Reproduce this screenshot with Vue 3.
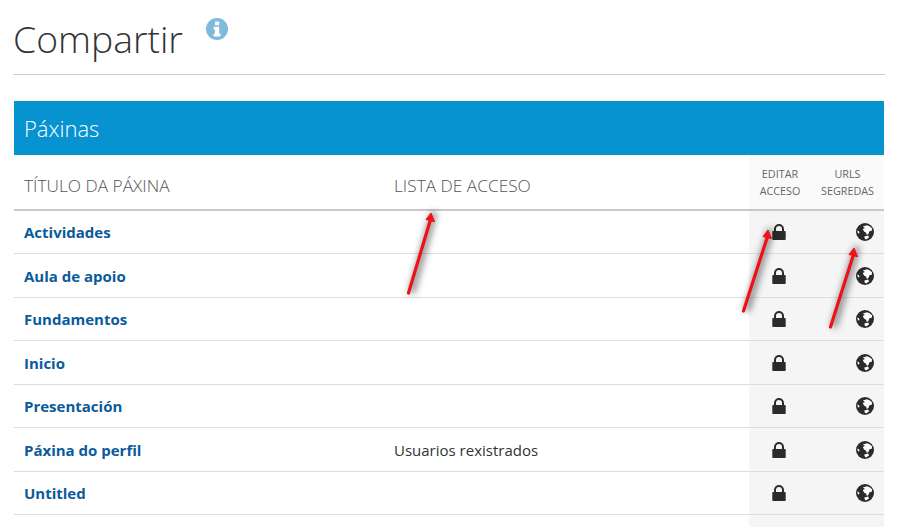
<script setup>
const pages = [
  { name: 'Actividades', access: '' },
  { name: 'Aula de apoio', access: '' },
  { name: 'Fundamentos', access: '' },
  { name: 'Inicio', access: '' },
  { name: 'Presentación', access: '' },
  { name: 'Páxina do perfil', access: 'Usuarios rexistrados' },
  { name: 'Untitled', access: '' },
  { name: '', access: '' }
]

// start and end of each red annotation arrow, in page coordinates
const arrows = [
  { x1: 408.5, y1: 293, x2: 431, y2: 214 },
  { x1: 743.5, y1: 311, x2: 768, y2: 231 },
  { x1: 830.5, y1: 327, x2: 854, y2: 249 }
]
</script>

<template>
  <div class="page">
    <header class="head">
      <h1>Compartir</h1>
      <svg class="info" viewBox="0 0 22 22" aria-hidden="true">
        <circle cx="11" cy="11" r="11" fill="#7fbadc" />
        <rect x="9" y="3.6" width="4.2" height="3.6" rx="0.6" fill="#fff" />
        <path d="M7.6 8.8h5.6v7h1.3v2.6H7.6v-2.6h1.3v-4.4H7.6z" fill="#fff" />
      </svg>
    </header>

    <section class="panel">
      <h2>Páxinas</h2>
      <table>
        <thead>
          <tr>
            <th class="title">TÍTULO DA PÁXINA</th>
            <th class="list">LISTA DE ACCESO</th>
            <th class="small edit">EDITAR<br>ACCESO</th>
            <th class="small urls">URLS<br>SEGREDAS</th>
          </tr>
        </thead>
        <tbody>
          <tr v-for="p in pages" :key="p.name" :class="{ last: !p.name }">
            <td class="title"><a href="#">{{ p.name }}</a></td>
            <td class="list">{{ p.access }}</td>
            <td class="edit">
              <svg v-if="p.name" class="lock" viewBox="0 0 14 16" aria-hidden="true">
                <path d="M3 7.5V5a4 4 0 0 1 8 0v2.5" fill="none" stroke="#2b2b2b" stroke-width="2" />
                <rect x="0.3" y="7" width="13.4" height="9" rx="0.8" fill="#2b2b2b" />
              </svg>
            </td>
            <td class="urls">
              <svg v-if="p.name" class="globe" viewBox="0 0 18 18" aria-hidden="true">
                <circle cx="9" cy="9" r="9" fill="#2b2b2b" />
                <path d="M6.8 3.6L11 2.2l2.6 1 2.4 2-.2 2.6-2.4.5-1 2.6-1.6 1.2-.6-2.4-2.2-1.2-1.2-2.4 2.2-1z" fill="#fff" />
                <path d="M8.4 13.4l3.8-.8.8 2-3 2-1.4-1.4z" fill="#fff" />
                <path d="M1.2 7.4l1.8.8.5 1.7-1.5.5z" fill="#fff" />
              </svg>
            </td>
          </tr>
        </tbody>
      </table>
    </section>

    <svg class="arrows" width="907" height="527" aria-hidden="true">
      <defs>
        <filter id="soft" x="-100%" y="-50%" width="300%" height="200%">
          <feGaussianBlur stdDeviation="3.5" />
        </filter>
      </defs>
      <g v-for="(a, i) in arrows" :key="i">
        <line :x1="a.x1 + 3" :y1="a.y1" :x2="a.x2 + 3" :y2="a.y2 - 2" stroke="#000" stroke-opacity="0.5" stroke-width="6" filter="url(#soft)" />
        <line :x1="a.x1" :y1="a.y1" :x2="a.x2" :y2="a.y2 + 4" stroke="#f01018" stroke-width="3.2" stroke-linecap="round" />
        <path :d="`M${a.x2} ${a.y2 - 1}l-5 6.5 8.6 2.2z`" fill="#f01018" stroke="#f01018" stroke-linejoin="round" />
      </g>
    </svg>
  </div>
</template>

<style>
body {
  margin: 0;
  background: #fff;
  overflow: hidden;
}
</style>

<style scoped>
.page {
  position: relative;
  width: 907px;
  height: 527px;
  overflow: hidden;
  font-family: "Open Sans", sans-serif;
  color: #333;
  box-sizing: border-box;
  padding: 0 22px 0 13px;
}

.head {
  display: flex;
  align-items: flex-start;
  height: 74px;
  border-bottom: 1px solid #ccc;
}

h1 {
  margin: 12px 1px 0 0;
  font-size: 37.3px;
  font-weight: 300;
  line-height: 54px;
  color: #333;
}

.info {
  width: 22px;
  height: 22px;
  margin: 18px 0 0 22px;
}

.panel {
  margin: 26px 1px 0;
}

h2 {
  margin: 0;
  height: 54px;
  padding: 0 10px;
  background: #0793d0;
  color: #fff;
  font-size: 22px;
  font-weight: 300;
  line-height: 54px;
}

table {
  width: 870px;
  border-collapse: collapse;
  table-layout: fixed;
}

th {
  height: 55px;
  padding: 7px 10px 0;
  box-sizing: border-box;
  border-bottom: 2px solid #c8c8c8;
  font-weight: 300;
  font-size: 17.3px;
  text-align: left;
  color: #555;
}

th.title { width: 370px; }
th.list { width: 365px; }
th.edit { width: 62px; }
th.urls { width: 73px; }

th.small {
  padding: 0;
  font-size: 10.8px;
  font-weight: 400;
  line-height: 17.5px;
  text-align: center;
  color: #666;
  background: #fafafa;
}

td {
  height: 43.5px;
  padding: 1px 10px 0;
  box-sizing: border-box;
  border-bottom: 1px solid #ddd;
  font-size: 15px;
  color: #333;
}

td a {
  color: #0b5a9b;
  font-weight: 700;
  text-decoration: none;
}

td.edit,
td.urls {
  padding: 1px 0 0;
  background: #f5f5f5;
  line-height: 0;
}

td.edit { text-align: center; padding-right: 3px; }
td.urls { text-align: right; padding-right: 10px; }

tr.last td { border-bottom: 0; }

tbody tr:first-child td { padding-top: 0; }

.lock {
  width: 14px;
  height: 16px;
}

.globe {
  width: 18px;
  height: 18px;
}

.arrows {
  position: absolute;
  left: 0;
  top: 0;
  pointer-events: none;
}
</style>
